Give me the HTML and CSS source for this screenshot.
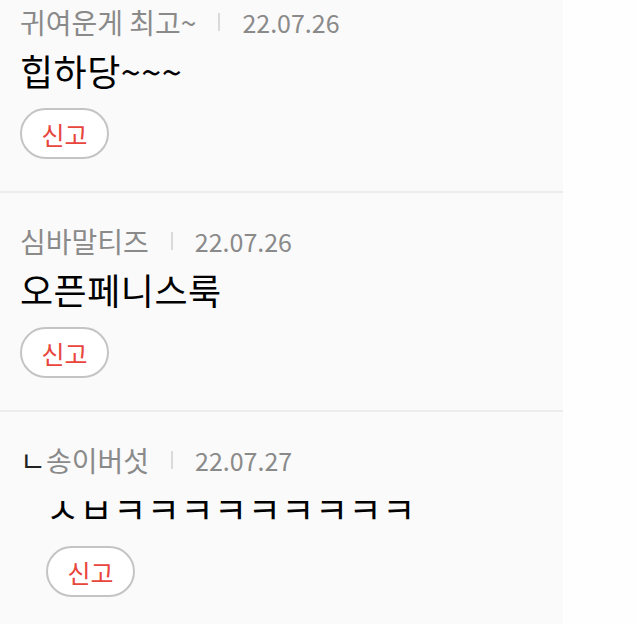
FILE: index.html
```html
<!DOCTYPE html>
<html>
<head>
  <title>댓글</title>
  <link rel="stylesheet" href="styles.css">
</head>
<body>
  <ul class="comments">
    <li class="comment">
      <div class="meta">
        <span class="name">귀여운게 최고~</span>
        <span class="sep"></span>
        <span class="date">22.07.26</span>
      </div>
      <p class="text">힙하당~~~</p>
      <button class="report">신고</button>
    </li>
    <li class="comment">
      <div class="meta">
        <span class="name">심바말티즈</span>
        <span class="sep"></span>
        <span class="date">22.07.26</span>
      </div>
      <p class="text">오픈페니스룩</p>
      <button class="report">신고</button>
    </li>
    <li class="comment reply">
      <div class="meta">
        <span class="mark">ㄴ</span>
        <span class="name">송이버섯</span>
        <span class="sep"></span>
        <span class="date">22.07.27</span>
      </div>
      <div class="body">
        <p class="text">ㅅㅂㅋㅋㅋㅋㅋㅋㅋㅋㅋ</p>
        <button class="report">신고</button>
      </div>
    </li>
  </ul>
</body>
</html>
```

FILE: styles.css
```css
body {
  margin: 0;
  background-color: #fefefe;
  font-family: "Noto Sans CJK KR", "Noto Sans", sans-serif;
}

.comments {
  list-style: none;
  width: 563px;
  margin: -26px 0 0;
  padding: 0;
  background-color: #fafafa;
}

.comment {
  padding: 30px 20px 32px;
  border-bottom: 2px solid #ececec;
}

.comment:last-child {
  border-bottom: none;
}

.meta {
  display: flex;
  align-items: center;
  height: 36px;
  font-size: 28px;
  color: #8a8a8a;
}

.date {
  font-size: 25px;
}

.sep {
  width: 2px;
  height: 18px;
  margin: 0 22px;
  background-color: #dadada;
}

.mark {
  width: 26px;
  color: #222;
}

.text {
  margin: 8px 0 0;
  font-size: 36px;
  line-height: 44px;
  letter-spacing: 0.5px;
  color: #000;
}

.report {
  display: block;
  width: 89px;
  height: 51px;
  margin-top: 16px;
  padding: 0;
  background-color: #fff;
  border: 2px solid #c4c4c4;
  border-radius: 26px;
  font-family: inherit;
  font-size: 25px;
  color: #e8453c;
  cursor: pointer;
}

.reply .body {
  padding-left: 26px;
}
```
